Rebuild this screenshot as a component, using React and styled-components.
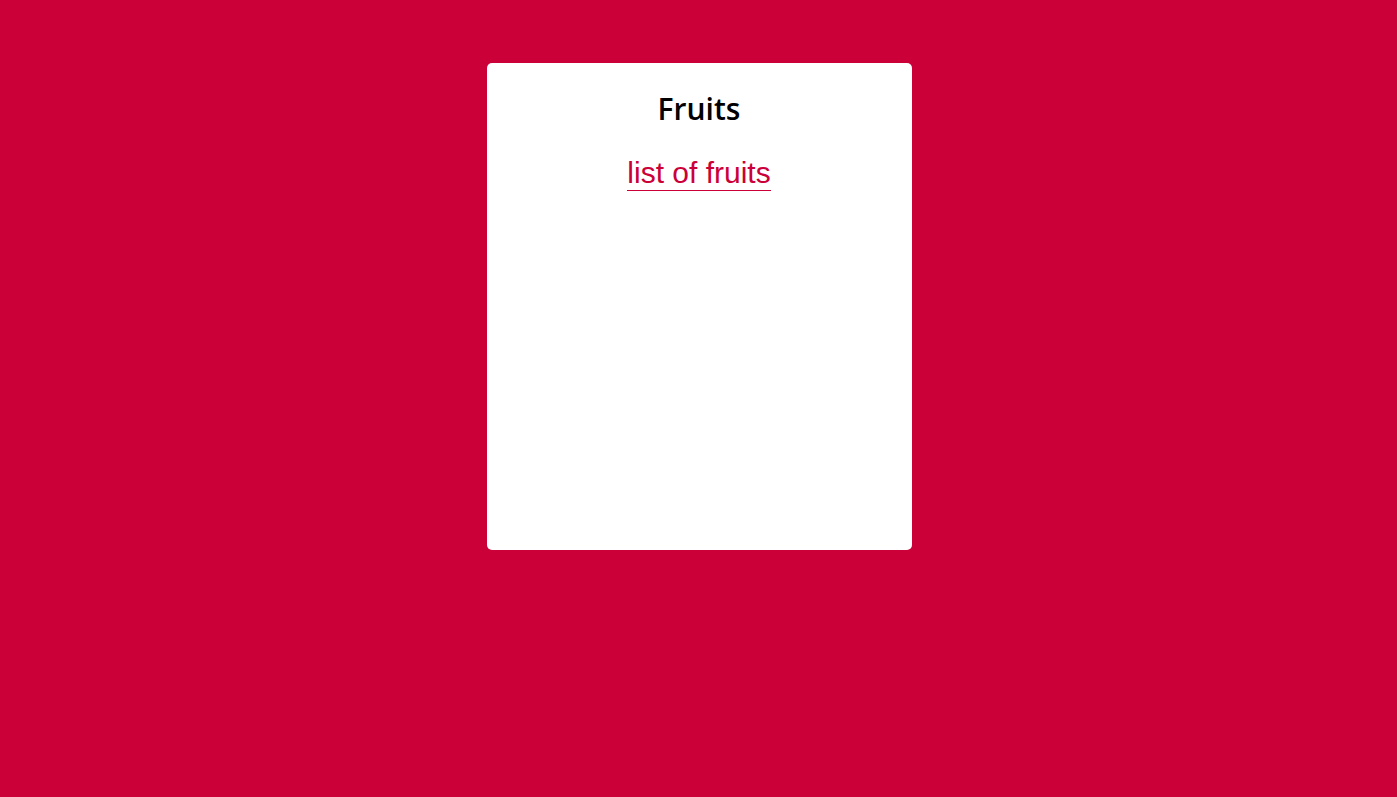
import React from "react";
import styled, { createGlobalStyle } from "styled-components";

const Global = createGlobalStyle`
  html, body { margin: 0; padding: 0; }
  body { background: #cc0039; font-family: "Open Sans", sans-serif; }
`;

const Page = styled.div`
  min-height: 797px;
  display: flex;
  justify-content: center;
  align-items: flex-start;
  padding: 63px 0 0 1px;
  box-sizing: border-box;
`;

const Card = styled.div`
  width: 425px;
  height: 487px;
  background: #fff;
  border-radius: 5px;
  display: flex;
  flex-direction: column;
  align-items: center;
  padding-top: 26px;
  box-sizing: border-box;
`;

const Title = styled.h2`
  margin: 0;
  font-family: "Open Sans", sans-serif;
  font-weight: 600;
  font-size: 30px;
  line-height: 40px;
  color: #000;
`;

const Link = styled.a`
  margin-top: 26px;
  font-family: "Liberation Sans", Arial, sans-serif;
  font-size: 30px;
  line-height: 35px;
  color: #cc0039;
  text-decoration: none;
  border-bottom: 1px solid #cc0039;
`;

export default function App() {
  return (
    <>
      <Global />
      <Page>
        <Card>
          <Title>Fruits</Title>
          <Link href="#">list of fruits</Link>
        </Card>
      </Page>
    </>
  );
}
